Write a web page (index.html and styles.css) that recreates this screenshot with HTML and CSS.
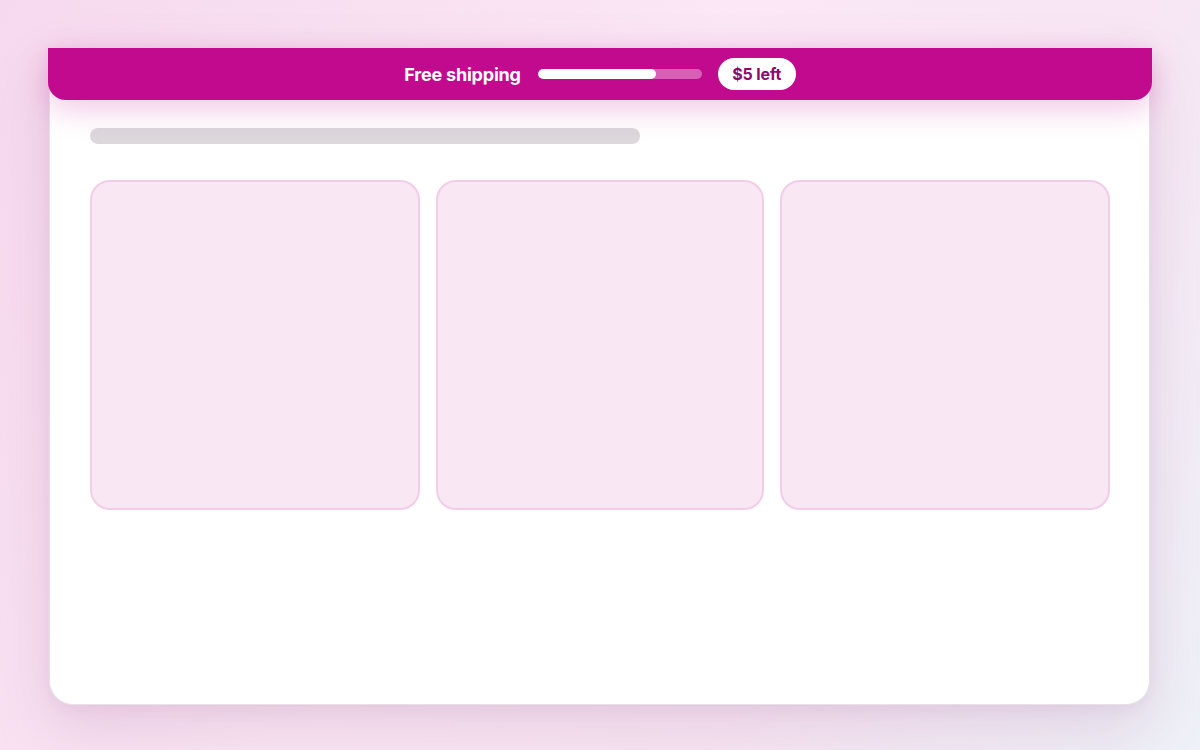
FILE: index.html
```html
<!DOCTYPE html>
<html lang="en">
<head>
    <meta charset="UTF-8">
    <meta name="viewport" content="width=device-width, initial-scale=1.0">
    <title>Shop</title>
    <link rel="stylesheet" href="styles.css">
</head>
<body>

<div class="page">
    <div class="panel">
        <div class="ship-bar">
            <span class="ship-label">Free shipping</span>
            <div class="ship-track">
                <div class="ship-fill" style="width: 72%"></div>
            </div>
            <span class="ship-pill">$5 left</span>
        </div>
        <div class="panel-body">
            <div class="skeleton-line"></div>
            <div class="tiles">
                <div class="tile"></div>
                <div class="tile"></div>
                <div class="tile"></div>
            </div>
        </div>
    </div>
</div>

</body>
</html>
```

FILE: styles.css
```css
html, body {
    margin: 0;
    height: 100%;
}
body {
    font-family: Inter, "Noto Sans", sans-serif;
    background: linear-gradient(120deg, #f6d9ee 0%, #fbe7f5 45%, #f8e6f4 70%, #eef1f8 100%);
    overflow: hidden;
}
.page {
    padding: 48px 50px 0 49px;
}
.panel {
    height: 657px;
    background: #fff;
    border: 1px solid #e8e2e8;
    border-top: none;
    border-radius: 0 0 24px 24px;
    box-sizing: border-box;
    box-shadow: 0 24px 60px rgba(150, 90, 140, 0.18), 0 4px 14px rgba(150, 90, 140, 0.08);
}
.ship-bar {
    position: relative;
    z-index: 1;
    height: 52px;
    margin: 0 -3px 0 -2px;
    background: #c20a8f;
    border-radius: 0 0 18px 18px;
    box-shadow: 0 10px 30px rgba(194, 10, 143, 0.22);
    display: flex;
    align-items: center;
    justify-content: center;
    gap: 16px;
}
.ship-label {
    color: #fff;
    font-size: 18px;
    font-weight: 700;
    letter-spacing: -0.2px;
    margin-right: 1px;
    padding-top: 1px;
}
.ship-track {
    width: 164px;
    height: 10px;
    border-radius: 5px;
    background: rgba(255, 255, 255, 0.35);
    overflow: hidden;
}
.ship-fill {
    height: 100%;
    background: #fff;
    border-radius: 5px;
}
.ship-pill {
    width: 78px;
    height: 32px;
    line-height: 32px;
    text-align: center;
    border-radius: 16px;
    background: #fff;
    color: #8c0a6a;
    font-size: 16px;
    font-weight: 700;
    letter-spacing: -0.1px;
}
.panel-body {
    padding: 28px 39px 0 40px;
}
.skeleton-line {
    width: 550px;
    height: 16px;
    border-radius: 8px;
    background: #dcd8dc;
}
.tiles {
    margin-top: 36px;
    display: grid;
    grid-template-columns: 330px 1fr 330px;
    gap: 16px;
}
.tile {
    height: 330px;
    box-sizing: border-box;
    background: #f9e7f4;
    border: 2px solid #f2cde8;
    border-radius: 20px;
}
```
